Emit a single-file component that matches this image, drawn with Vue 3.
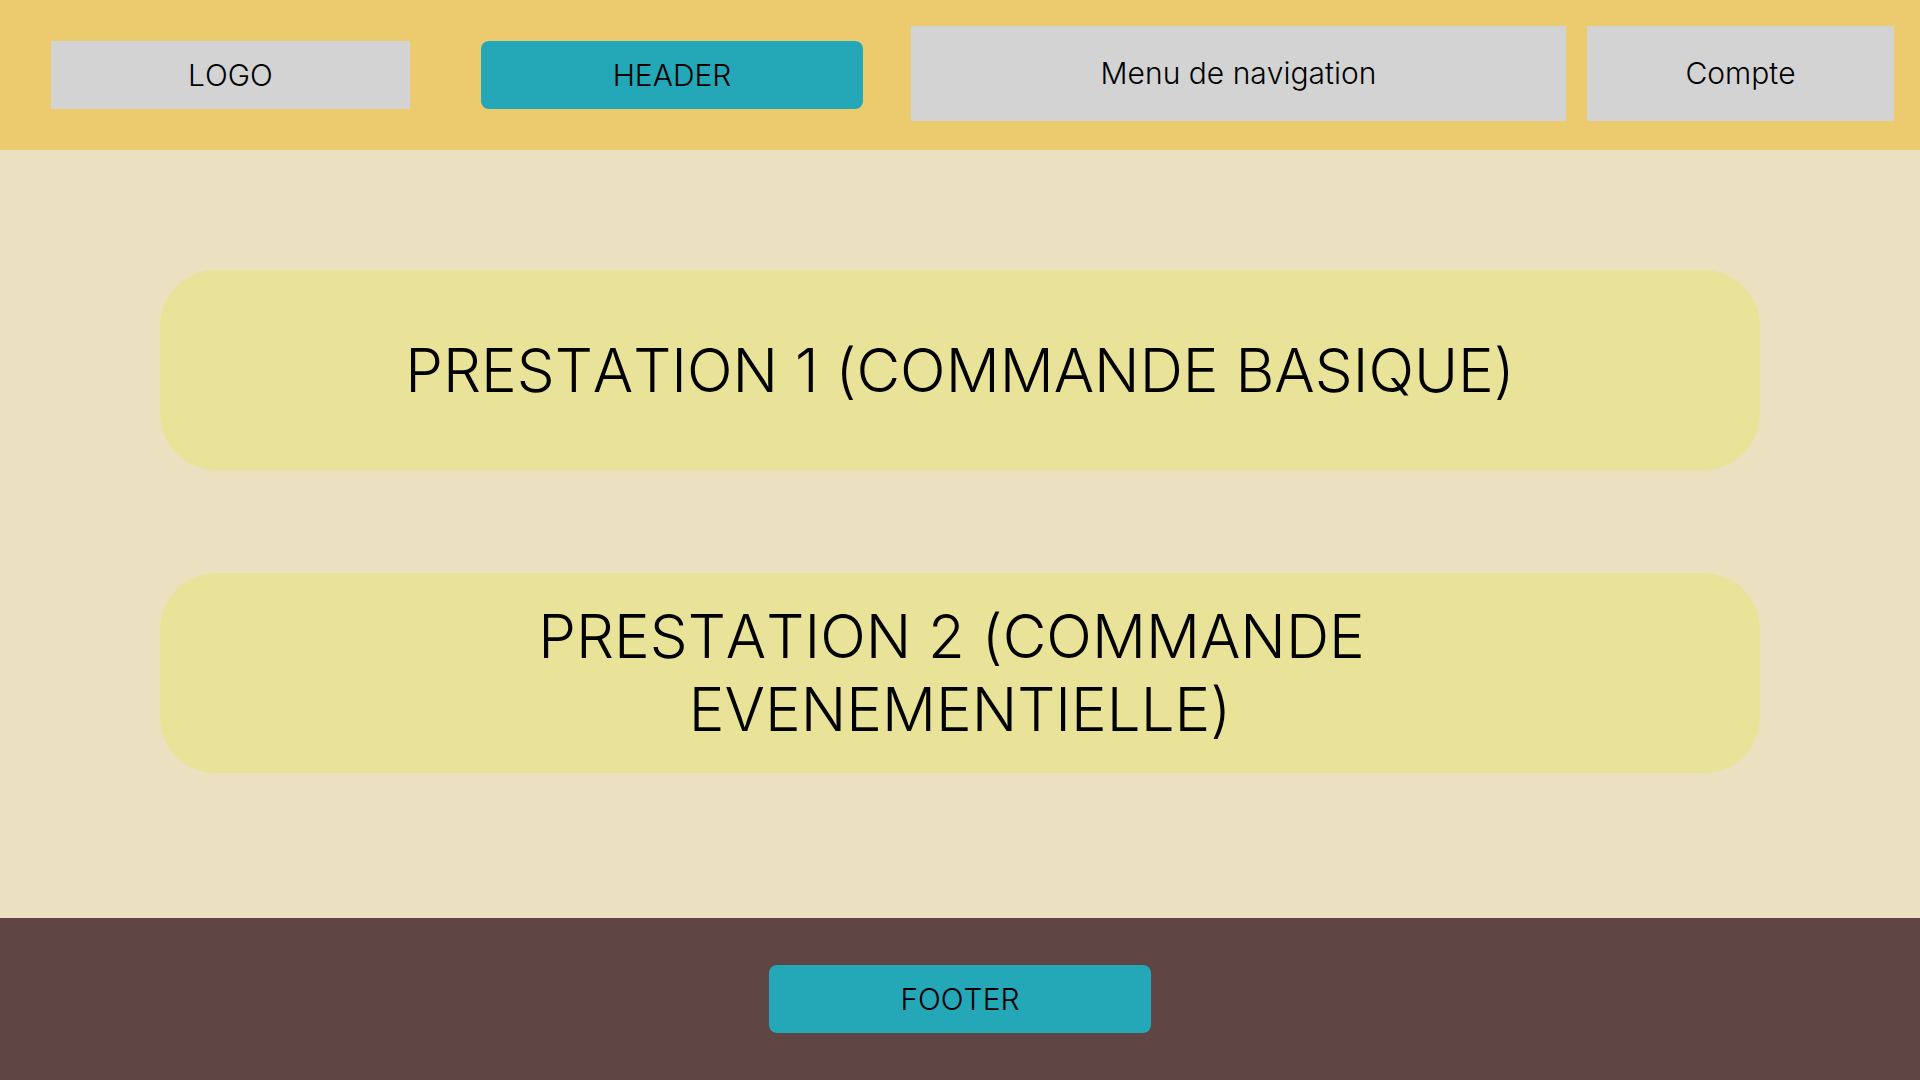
<script setup>
const services = [
  { id: 1, label: 'PRESTATION 1 (COMMANDE BASIQUE)' },
  { id: 2, label: 'PRESTATION 2 (COMMANDE EVENEMENTIELLE)' },
]
</script>

<template>
  <div class="page">
    <header class="top">
      <div class="brand">
        <a class="block logo" href="#">LOGO</a>
        <div class="tag">HEADER</div>
      </div>
      <div class="menu">
        <nav class="block navigation">Menu de navigation</nav>
        <button class="block account" type="button">Compte</button>
      </div>
    </header>

    <main class="services">
      <a v-for="service in services" :key="service.id" class="service" href="#">{{ service.label }}</a>
    </main>

    <footer class="bottom">
      <div class="tag">FOOTER</div>
    </footer>
  </div>
</template>

<style>
body {
  margin: 0;
}
</style>

<style scoped>
.page {
  display: flex;
  flex-direction: column;
  min-height: 100vh;
  background: #ebe0c0;
  color: #000;
  font-family: Inter, "Liberation Sans", sans-serif;
  font-size: 30px;
  font-weight: 300;
  font-kerning: none;
  font-variant-ligatures: no-contextual;
  line-height: 36px;
}

.page * {
  box-sizing: border-box;
}

.top {
  display: flex;
  align-items: flex-start;
  gap: 48px;
  min-height: 150px;
  padding: 0 26px 0 51px;
  background: #ebcb6d;
}

.brand {
  display: flex;
  flex: 812 1 0;
  gap: 71px;
  padding-top: 41px;
}

.menu {
  display: flex;
  flex: 983 1 0;
  gap: 21px;
  padding-top: 26px;
}

.block,
.tag,
.service {
  display: flex;
  align-items: center;
  justify-content: center;
  text-align: center;
  color: inherit;
  text-decoration: none;
}

.block {
  border: 0;
  padding: 0;
  background: #d3d3d3;
  font: inherit;
  font-kerning: none;
  font-variant-ligatures: no-contextual;
}

.logo {
  flex: 359 1 0;
  min-height: 68px;
}

.tag {
  width: 382px;
  min-height: 68px;
  border-radius: 8px;
  background: #24a7b7;
}

.navigation {
  flex: 655 1 0;
  min-height: 95px;
}

.menu .block {
  padding-bottom: 2px;
}

.account {
  flex: 307 1 0;
}

.services {
  display: flex;
  flex: 1;
  flex-direction: column;
  align-items: center;
  gap: 103px;
  padding: 120px 160px 145px;
}

.service {
  width: 100%;
  min-height: 200px;
  padding: 0 200px;
  border-radius: 56px;
  background: #e9e399;
  font-size: 60px;
  line-height: 73px;
  white-space: break-spaces;
}

.bottom {
  display: flex;
  align-items: center;
  justify-content: center;
  min-height: 162px;
  background: #604545;
}
</style>
